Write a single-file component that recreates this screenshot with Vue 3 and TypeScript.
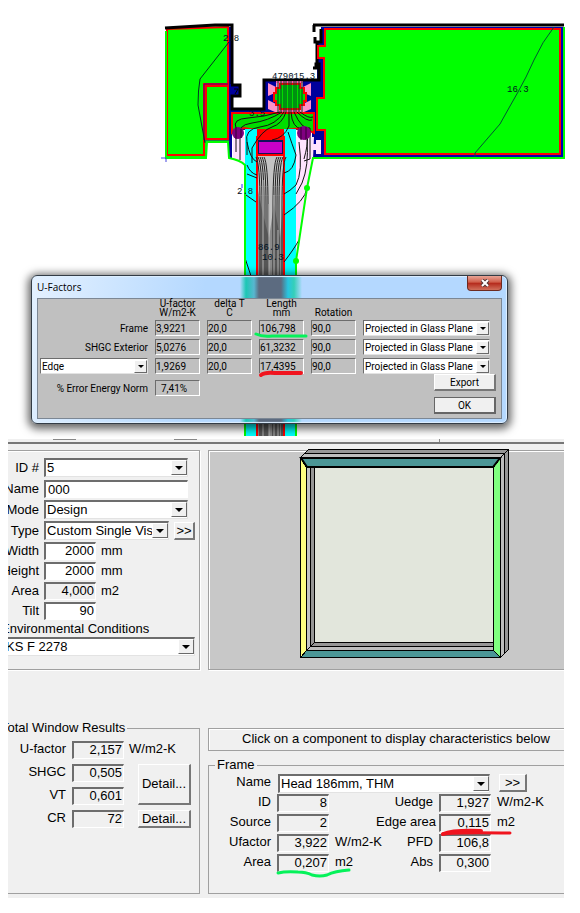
<script setup lang="ts">
import { ref } from 'vue'

interface FactorRow {
  label: string
  u: string
  delta: string
  length: string
  rotation: string
}

const factorRows: FactorRow[] = [
  { label: 'Frame', u: '3,9221', delta: '20,0', length: '106,798', rotation: '90,0' },
  { label: 'SHGC Exterior', u: '5,0276', delta: '20,0', length: '61,3232', rotation: '90,0' },
  { label: 'Edge', u: '1,9269', delta: '20,0', length: '17,4395', rotation: '90,0' },
]

const sizes = [
  { label: 'Width', value: '2000', unit: 'mm', computed: false },
  { label: 'Height', value: '2000', unit: 'mm', computed: false },
  { label: 'Area', value: '4,000', unit: 'm2', computed: true },
  { label: 'Tilt', value: '90', unit: '', computed: false },
]

const totals = [
  { label: 'U-factor', value: '2,157', unit: 'W/m2-K' },
  { label: 'SHGC', value: '0,505', unit: '' },
  { label: 'VT', value: '0,601', unit: '' },
  { label: 'CR', value: '72', unit: '' },
]

const frameLeft = [
  { label: 'ID', value: '8', unit: '' },
  { label: 'Source', value: '2', unit: '' },
  { label: 'Ufactor', value: '3,922', unit: 'W/m2-K' },
  { label: 'Area', value: '0,207', unit: 'm2' },
]

const frameRight = [
  { label: 'Uedge', value: '1,927', unit: 'W/m2-K' },
  { label: 'Edge area', value: '0,115', unit: 'm2' },
  { label: 'PFD', value: '106,8', unit: '' },
  { label: 'Abs', value: '0,300', unit: '' },
]

const windowName = ref('000')

// Isotherms bunch up between the two glass panes.
const paneLines = [260, 262, 264, 266, 268, 273, 275, 277, 279, 282]
const blockLines = [278, 281, 284, 286, 289, 291, 294, 296, 299, 302]
</script>

<template>
  <main class="page">
    <section class="stage">
      <svg class="section-view" viewBox="0 0 580 436" role="img" aria-label="Frame cross section with isotherms">
        <!-- left block -->
        <path d="M228 27h4v131h-4z" fill="#00009c" />
        <path d="M166 28L229 26V141H206V158H166z" fill="#0f0" />
        <path d="M167 156V29l61-2v57h-24v71h-37" fill="none" stroke="#f00" stroke-width="2" />
        <path d="M206 86h22v53h-22z" fill="#0f0" stroke="#f00" stroke-width="2" />
        <path d="M204 140V84h24M204 141h26" fill="none" stroke="#408" />
        <path d="M229 42L200 79Q198 90 198 105L205 143" fill="none" stroke="#032" />
        <path d="M165 28L215 25H232V84" fill="none" stroke="#000" stroke-width="3" />
        <!-- centre frame -->
        <path d="M231 109h33V80h53V43h8v115h-13v-28h-80z" fill="#00009c" />
        <path d="M232 85h8v11h-8z" fill="#00009c" />
        <path d="M231 85h9v11h-8v13h32V80h55V64h-3v4h-3M317 43v20" fill="none" stroke="#000" stroke-width="3" />
        <path d="M234 89h4l-3 5" fill="none" stroke="#000" />
        <path d="M321 27h4v20h-4z" fill="#00009c" />
        <path d="M314 32v-7M321 29v13h-6v-5" fill="none" stroke="#000" stroke-width="3" />
        <path d="M276 81h27v31h-27z" fill="#ff4fa8" />
        <path d="M268 83l8 4v-4h3v10h-4l-7 3zM268 100l8 4v-3h3v11h-4l-7-3zM311 83l-8 4v-4h-3v10h4l7 3zM311 100l-8 4v-3h-3v11h4l7-3z" fill="#ff8fc8" />
        <path d="M280 84h20v4h4v5h2v8h-2v4h-4v4h-20v-4h-4v-4h-2v-8h2v-5h4z" fill="#0d0" stroke="#f00" stroke-width="2" />
        <path v-for="x in blockLines" :key="x" :d="`M${x} 81v31`" stroke="#042" fill="none" />
        <!-- sloped sealant wedge -->
        <path d="M232 113h82v20l-10-5-20 2h-28l-12-2-12 5z" fill="#0d0" stroke="#f00" stroke-width="2" />
        <path d="M257 129h27v28h-27z" fill="#f00" />
        <path d="M245 129h12v307h-12zM284 129h12v307h-12z" fill="#0ff" />
        <path d="M233 137h12v27l-12-6zM296 137h18l-1 22-17 100z" fill="#ffe3ff" />
        <path d="M258 156h26v280h-26z" fill="#8a8a8a" />
        <path d="M258 156h26v38l-4 44-6-34-5 34-7-28-4-20z" fill="#c3c3c3" />
        <path d="M258 141h25v13h-25z" fill="#c800c8" stroke="#10105a" stroke-width="2" />
        <path d="M257 136v300M284 136v300M257 155h27" stroke="#f00" stroke-width="2" fill="none" />
        <g fill="none" stroke="#222">
          <path v-for="x in paneLines" :key="x" :d="`M${x < 271 ? x - 4 : x + 4} 157Q${x} 164 ${x} 205V436`" />
        </g>
        <path d="M263 180v256M269 204v232M274 195v241M278 230v206" fill="none" stroke="#b5b5b5" />
        <!-- heat contours -->
        <g fill="none" stroke="#111">
          <path d="M280 112Q264 117 248 118T236 128v24M282 112Q268 121 252 123T240 138v22M284 112Q276 125 260 127T247 143v12M286 112Q282 124 272 127T252 148v15M289 112V126q-5 12-17 14M291 112q1 16 11 17t2 30M294 112q8 18 16 16v17M297 112q10 10 15 8M300 112q9 7 13 5" />
          <path d="M247 142q3 17 10 20M247 165q3 8 10 10M247 174l10 4M246 195l10 7M288 132q4 12 8 23-2 16-12 18M299 142q4 30-3 43-6 6-12 9M307 140q2 26-5 43l-6 11M310 145v14l-6 2" />
          <path d="M307 188q-2 13-23 27M299 240q-5 9-15 22M245 258l6 18" />
        </g>
        <circle cx="238" cy="133" r="6" fill="#800080" />
        <circle cx="304" cy="133" r="7" fill="#800080" />
        <path d="M236 127v12M241 129v9M301 127v13M306 127v13" stroke="#303" />
        <!-- notch fittings -->
        <path d="M316 140h5v14h-5v-4h-3v-6h3z" fill="#ffe3ff" />
        <!-- right block -->
        <path d="M324 28h239v129h-239v-27h-7V98h7V58h-6V46h6z" fill="#0f0" />
        <path d="M322 28h240v128H324" fill="none" stroke="#0000b4" stroke-width="2" />
        <path d="M325 29h235v125H325v-24h-8V98h7V58h-6V46h7z" fill="none" stroke="#f00" stroke-width="2" />
        <path d="M313 25h251" stroke="#000" stroke-width="3" />
        <path d="M554 27Q542 42 534 60T518 92 500 124L475 153v5" fill="none" stroke="#053" />
        <path d="M166 31V158h40l1-16h21l1 16q11 2 16 7V436M296 436V261l11-73 6-30h251V27" fill="none" stroke="#0f0" stroke-width="2" />
        <path d="M161 158h5v4" fill="none" stroke="#44d" />
        <circle cx="307" cy="188" r="3" fill="#0f0" />
        <circle cx="296" cy="261" r="3" fill="#0f0" />
        <path d="M242 184v4" stroke="#33f" />
        <g class="contour-text">
          <text x="223" y="41">2.8</text>
          <text x="272" y="79">479015.3</text>
          <text x="507" y="92">16.3</text>
          <text x="237" y="194">2.8</text>
          <text x="249" y="116">3.5</text>
          <text x="258" y="250">86.9</text>
          <text x="262" y="260">10.3</text>
        </g>
      </svg>

      <div class="dialog" role="dialog" aria-label="U-Factors">
        <header class="title-bar">
          <span>U-Factors</span>
          <button class="close" type="button" aria-label="Close">
            <svg viewBox="0 0 10 8" width="10" height="8">
              <path d="M2 1l6 6M8 1L2 7" stroke="#533" stroke-width="4" />
              <path d="M2 1l6 6M8 1L2 7" stroke="#fff" stroke-width="2" />
            </svg>
          </button>
        </header>
        <div class="client">
          <div class="factor-grid">
            <span></span>
            <span class="head">U-factor<br />W/m2-K</span>
            <span class="head">delta T<br />C</span>
            <span class="head">Length<br />mm</span>
            <span class="head">Rotation</span>
            <span></span>
            <template v-for="row in factorRows" :key="row.label">
              <span v-if="row.label === 'Edge'" class="combo">
                <select aria-label="Component"><option>Edge</option></select>
                <i class="arrow"></i>
              </span>
              <span v-else class="factor-label">{{ row.label }}</span>
              <input class="field" :value="row.u" readonly :aria-label="row.label + ' U-factor'" />
              <input class="field" :value="row.delta" readonly :aria-label="row.label + ' delta T'" />
              <input class="field" :value="row.length" readonly :aria-label="row.label + ' length'" />
              <input class="field" :value="row.rotation" readonly :aria-label="row.label + ' rotation'" />
              <span class="combo">
                <select :aria-label="row.label + ' projection'"><option>Projected in Glass Plane</option></select>
                <i class="arrow"></i>
              </span>
            </template>
          </div>
          <div class="dialog-foot">
            <div class="error-norm">
              <label for="error-norm">% Error Energy Norm</label>
              <input id="error-norm" class="field" value="7,41%" readonly />
            </div>
            <div class="dialog-buttons">
              <button class="btn" type="button">Export</button>
              <button class="btn" type="button">OK</button>
            </div>
          </div>
          <svg class="marks" viewBox="0 0 60 50" width="60" height="50" aria-hidden="true">
            <path d="M4 6q6 3 16 2h34" fill="none" stroke="#05f25a" stroke-width="3" stroke-linecap="round" />
            <path d="M9 47q4-3 14-2h26" fill="none" stroke="#f0141e" stroke-width="4" stroke-linecap="round" />
          </svg>
        </div>
      </div>
    </section>

    <section class="workspace">
      <div class="toolbar-edge"><i></i><i></i><i></i></div>
      <div class="panels">
        <form class="panel definition">
          <div class="row">
            <label for="win-id">ID #</label>
            <span class="combo wide"><select id="win-id"><option>5</option></select><i class="arrow"></i></span>
          </div>
          <div class="row">
            <label for="win-name">Name</label>
            <input id="win-name" v-model="windowName" class="field white name" />
          </div>
          <div class="row">
            <label for="win-mode">Mode</label>
            <span class="combo wide"><select id="win-mode"><option>Design</option></select><i class="arrow"></i></span>
          </div>
          <div class="row">
            <label for="win-type">Type</label>
            <span class="combo type"><select id="win-type"><option>Custom Single Vis</option></select><i class="arrow"></i></span>
            <button class="btn more" type="button">&gt;&gt;</button>
          </div>
          <div v-for="s in sizes" :key="s.label" class="row size">
            <label :for="'size-' + s.label">{{ s.label }}</label>
            <input :id="'size-' + s.label" class="field number" :class="{ white: !s.computed }" :value="s.value" :readonly="s.computed" />
            <span>{{ s.unit }}</span>
          </div>
          <label class="env-label" for="env">Environmental Conditions</label>
          <span class="combo env"><select id="env"><option>KS F 2278</option></select><i class="arrow"></i></span>
        </form>

        <div class="panel preview">
          <svg class="window-view" viewBox="299 448 212 211" width="212" height="211" role="img" aria-label="Window preview">
            <g stroke="#000" stroke-width="1" shape-rendering="crispEdges">
              <path d="M300.500 457.500l8-8h200v200l-8 8z" fill="#969696" />
              <path d="M300.500 457.500l4-4h200v200l-4 4z" fill="#bdbdbd" />
              <path d="M500.500 457.500l8-8" />
              <path d="M300.500 457.500h200v200h-200z" fill="#c3c3c3" />
              <path d="M310.500 467.500h183v179h-183z" fill="#969696" />
              <path d="M306.500 650.500l8-8h179v8z" fill="#bdbdbd" />
              <path d="M310.500 646.500l4-4h179v4z" fill="#969696" />
              <path d="M314.500 467.500h179v175h-179z" fill="#e2e6dc" />
              <path d="M300.500 457.500l6 10v183l-6 7z" fill="#ffff80" />
              <path d="M500.500 457.500l-7 10v183l7 7z" fill="#80ff80" />
              <path d="M300.500 657.500l6-7h187l7 7z" fill="#4b9696" />
            </g>
            <path d="M301 458h199l-7 9H307z" fill="#4b9696" stroke="#000" stroke-width="2" />
          </svg>
        </div>

        <fieldset class="group totals">
          <legend>Total Window Results</legend>
          <div class="totals-grid">
            <template v-for="t in totals" :key="t.label">
              <label :for="'total-' + t.label">{{ t.label }}</label>
              <input :id="'total-' + t.label" class="field number" :value="t.value" readonly />
              <span v-if="t.unit" class="unit">{{ t.unit }}</span>
            </template>
            <button class="btn detail tall" type="button">Detail...</button>
            <button class="btn detail short" type="button">Detail...</button>
          </div>
        </fieldset>

        <div class="inspector">
          <p class="hint">Click on a component to display characteristics below</p>
          <fieldset class="group frame">
            <legend>Frame</legend>
            <div class="frame-name">
              <label for="frame-name">Name</label>
              <span class="combo"><select id="frame-name"><option>Head 186mm, THM</option></select><i class="arrow"></i></span>
              <button class="btn more" type="button">&gt;&gt;</button>
            </div>
            <div class="frame-columns">
              <div class="frame-values">
                <template v-for="f in frameLeft" :key="f.label">
                  <label :for="'frame-' + f.label">{{ f.label }}</label>
                  <input :id="'frame-' + f.label" class="field number" :value="f.value" readonly />
                  <span>{{ f.unit }}</span>
                </template>
              </div>
              <div class="frame-values second">
                <template v-for="f in frameRight" :key="f.label">
                  <label :for="'frame-' + f.label">{{ f.label }}</label>
                  <input :id="'frame-' + f.label" class="field number" :value="f.value" readonly />
                  <span>{{ f.unit }}</span>
                </template>
              </div>
              <svg class="marks" viewBox="0 0 240 52" width="240" height="52" aria-hidden="true">
                <path d="M3 46q8-2 20-1 8 0 14 3 8 2 15 0 8-4 22-5" fill="none" stroke="#05f25a" stroke-width="3" stroke-linecap="round" />
                <path d="M168 7q10-4 38-3" fill="none" stroke="#f0141e" stroke-width="4" stroke-linecap="round" />
                <path d="M168 7q14-2 67-1" fill="none" stroke="#f0141e" stroke-width="3" stroke-linecap="round" />
              </svg>
            </div>
          </fieldset>
        </div>
      </div>
    </section>
  </main>
</template>

<style>
body {
  margin: 0;
  background: #fff;
}
</style>

<style scoped>
.page {
  font: 13px/16px 'Liberation Sans', Arial, sans-serif;
  color: #000;
  padding-bottom: 15px;
}
.stage {
  position: relative;
}
.section-view {
  display: block;
  width: 100%;
}
.contour-text {
  font: 9px 'Liberation Mono', monospace;
  fill: #012;
}

/* shared controls */
.field {
  box-sizing: border-box;
  width: 100%;
  min-width: 0;
  height: 18px;
  margin: 0;
  padding: 0 2px;
  border: 1px solid #fff;
  border-top: 2px solid #6d6d6d;
  border-left: 2px solid #6d6d6d;
  border-radius: 0;
  background: #f0f0f0;
  font: inherit;
  color: inherit;
  outline: none;
}
.field.white {
  background: #fff;
}
.field.number {
  padding: 0 1px 2px;
  text-align: right;
}
.combo {
  display: grid;
  min-width: 0;
}
.combo select {
  grid-area: 1 / 1;
  box-sizing: border-box;
  width: 100%;
  height: 19px;
  margin: 0;
  padding: 0 16px 0 1px;
  appearance: none;
  border: 1px solid #e3e3e3;
  border-top: 2px solid #6d6d6d;
  border-left: 2px solid #6d6d6d;
  border-radius: 0;
  background: #fff;
  font: inherit;
  color: inherit;
}
.arrow {
  grid-area: 1 / 1;
  justify-self: end;
  align-self: center;
  display: grid;
  place-items: center;
  box-sizing: border-box;
  width: 16px;
  height: 15px;
  margin-right: 1px;
  border: 1px solid #fff;
  border-right-color: #696969;
  border-bottom-color: #696969;
  background: #f0f0f0;
  pointer-events: none;
}
.arrow::before {
  content: '';
  border: 4px solid transparent;
  border-top-color: #000;
  border-bottom: 0;
}
.btn {
  box-sizing: border-box;
  margin: 0;
  padding: 0;
  border: 1px solid #fff;
  border-right: 2px solid #777;
  border-bottom: 2px solid #777;
  border-radius: 0;
  background: #f0f0f0;
  font: inherit;
  color: inherit;
}

/* dialog */
.dialog {
  position: absolute;
  top: 275px;
  left: 31px;
  right: 72px;
  box-sizing: border-box;
  padding: 0 5px 4px;
  border: 1px solid #333c46;
  border-radius: 6px;
  background: linear-gradient(90deg, transparent 208px, #1cc7b4 214px, #58b7d0 222px, #5c6b80 227px, #5c6b80 249px, #28c5e0 256px, #35cfb8 262px, transparent 270px),
    linear-gradient(100deg, #e4f1ff, #b4d8ff 35%, #b4d8ff);
  box-shadow: inset 0 0 1px 1px #dff0ff, 0 2px 9px 3px rgba(0, 0, 0, 0.6);
  font-family: Roboto, 'Liberation Sans', sans-serif;
  font-size: 10px;
  line-height: 9px;
}
.title-bar {
  display: flex;
  justify-content: space-between;
  align-items: center;
  height: 22px;
  font-family: 'Open Sans', sans-serif;
}
.close {
  display: grid;
  place-items: center;
  align-self: flex-start;
  width: 35px;
  height: 15px;
  padding: 0;
  border: 1px solid #6d2a20;
  border-top: 0;
  border-radius: 0 0 4px 4px;
  background: linear-gradient(#e8a496, #cf5c48 45%, #b4281a 50%, #d0705c);
}
.client {
  position: relative;
  padding: 0 11px 4px 2px;
  border: 1px solid #7c8794;
  background: #c0c0c0;
}
.factor-grid {
  display: grid;
  grid-template-columns: 108px repeat(4, 45px) 1fr;
  column-gap: 7px;
  row-gap: 3px;
  align-items: center;
}
.head {
  align-self: end;
  text-align: center;
}
.factor-label {
  text-align: right;
}
.dialog .field {
  height: 16px;
  padding-left: 0;
  border-width: 1px;
  background: #c0c0c0;
}
.dialog .combo select {
  height: 16px;
  border-width: 1px;
  padding-right: 12px;
}
.dialog .arrow {
  width: 13px;
  height: 13px;
}
.dialog .arrow::before {
  border-width: 3px;
  border-bottom: 0;
}
.dialog-foot {
  display: flex;
  justify-content: space-between;
}
.error-norm {
  display: grid;
  grid-template-columns: 108px 45px;
  column-gap: 7px;
  align-items: center;
  align-self: flex-start;
  padding-top: 6px;
}
.error-norm label {
  text-align: right;
}
.dialog .error-norm .field {
  padding-left: 5px;
}
.dialog-buttons {
  display: grid;
  gap: 6px;
  padding-top: 0;
  margin-right: -6px;
}
.dialog-buttons .btn {
  width: 62px;
  height: 17px;
}
.dialog-buttons .btn:last-child {
  border-color: #666;
}
.marks {
  position: absolute;
  pointer-events: none;
}
.client .marks {
  left: 214px;
  top: 29px;
}

/* workspace */
.workspace {
  margin: 3px 16px 0 8px;
  padding-bottom: 4px;
  background: #f0f0f0;
  overflow: hidden;
}
.toolbar-edge {
  display: flex;
  height: 3px;
  padding-left: 45px;
  border-bottom: 2px solid #777;
}
.toolbar-edge i {
  width: 23px;
  height: 1px;
  margin-right: 98px;
  background: #888;
}
.toolbar-edge i:last-child {
  width: 1px;
  height: 3px;
  margin-left: 144px;
}
.panels {
  display: grid;
  grid-template-columns: 200px 1fr;
  column-gap: 8px;
  row-gap: 58px;
  margin: 6px -4px 0 -8px;
}
.panel {
  box-sizing: border-box;
  border: 1px solid #a0a0a0;
  box-shadow: inset 1px 1px #fff, 1px 1px #fff;
}
.definition {
  padding: 6px 4px 13px 0;
}
.row {
  display: flex;
  align-items: center;
  gap: 5px;
  height: 21px;
}
.row label {
  display: flex;
  justify-content: flex-end;
  flex: none;
  width: 38px;
}
.row .wide {
  width: 144px;
}
.row .name {
  width: 144px;
}
.row .type {
  width: 126px;
}
.more {
  width: 21px;
  height: 18px;
  line-height: 13px;
}
.size {
  height: 20px;
}
.size .field {
  width: 52px;
}
.env-label {
  display: block;
}
.env select {
  padding-left: 3px;
}
.preview {
  padding: 1px;
  background: #c8c8c8;
}
.window-view {
  display: block;
  margin: -4px 0 0 89px;
}
.group {
  min-width: 0;
  margin: 0;
  padding: 0;
  border: 1px solid #a0a0a0;
  box-shadow: none;
}
.group legend {
  padding: 0 2px;
}
.totals {
  margin-top: -8px;
}
.totals legend {
  padding-left: 0;
}
.totals-grid {
  display: grid;
  grid-template-columns: 65px 58px 14px 53px;
  grid-auto-rows: 18px;
  row-gap: 5px;
  padding-top: 5px;
}
.totals-grid label {
  grid-column: 1;
  text-align: right;
}
.totals-grid .number {
  grid-column: 2;
  justify-self: end;
  width: 52px;
}
.totals-grid .unit {
  grid-column: 3 / 5;
  grid-row: 1;
  padding-left: 5px;
  white-space: nowrap;
}
.totals-grid .detail {
  grid-column: 4;
}
.tall {
  grid-row: 2 / 4;
}
.short {
  grid-row: 4;
}
.hint {
  margin: 0 0 6px;
  padding: 2px 0 3px 16px;
  border: 1px solid #a0a0a0;
  box-shadow: inset 1px 1px #fff;
  text-align: center;
}
.frame {
  padding-bottom: 21px;
}
.frame legend {
  margin-left: 6px;
}
.frame-name {
  display: grid;
  grid-template-columns: 62px 212px 28px;
  column-gap: 7px;
  padding-top: 1px;
}
.frame-name label {
  text-align: right;
}
.frame-name .more {
  width: 28px;
  margin-left: 2px;
}
.frame-columns {
  position: relative;
  display: flex;
  padding-top: 1px;
}
.frame-values {
  display: grid;
  grid-template-columns: 62px 52px 1fr;
  grid-auto-rows: 18px;
  row-gap: 2px;
  column-gap: 6px;
  width: 167px;
  white-space: nowrap;
}
.frame-values.second {
  grid-template-columns: 57px 52px 1fr;
}
.frame-values label {
  text-align: right;
}
.frame-columns .marks {
  left: 66px;
  top: 34px;
}
</style>
